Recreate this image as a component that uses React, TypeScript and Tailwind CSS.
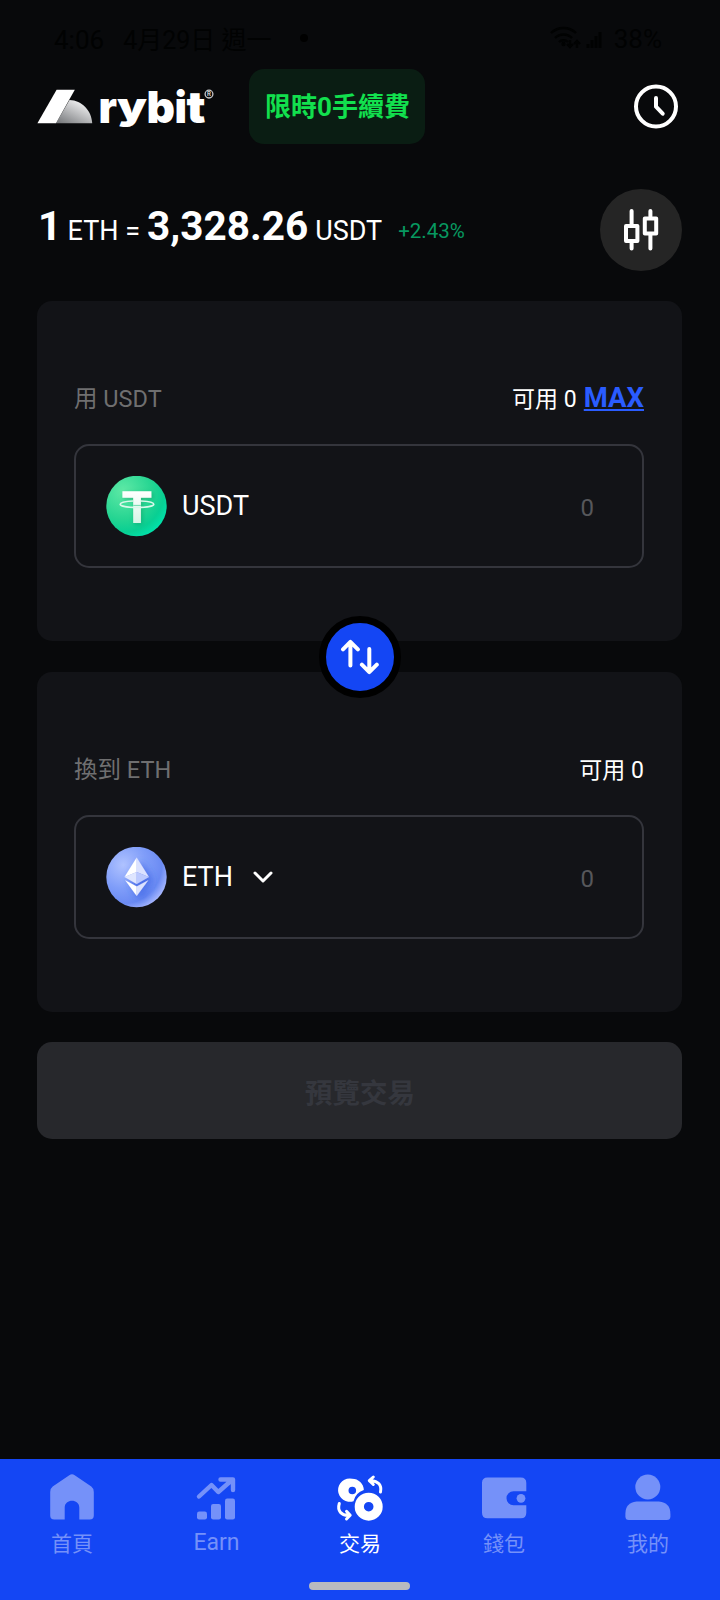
import type { ReactNode } from 'react';

const BrandLogo = () => (
  <svg width="180" height="44" viewBox="0 0 180 44" className="overflow-visible">
    <defs>
      <linearGradient id="brand-arc" x1="0.1" y1="1" x2="0.8" y2="0.1">
        <stop offset="0" stopColor="#77797c" />
        <stop offset="1" stopColor="#f4f4f5" />
      </linearGradient>
    </defs>
    <path d="M19 38.3 32.5 15C45 15.5 54.5 25.5 55.2 38.3Z" fill="url(#brand-arc)" />
    <path d="M0.4 38.3 19.6 4.7H37.8L19 38.3Z" fill="#fff" />
    <g fill="#fff" className="font-['Inter',sans-serif] text-[44px] font-black">
      <text x="61.500" y="38.200" textLength="18.500" lengthAdjust="spacingAndGlyphs">r</text>
      <text x="80" y="33.500" textLength="30" lengthAdjust="spacingAndGlyphs" className="text-[37px]">y</text>
      <text x="109.500" y="38.200" textLength="28.500" lengthAdjust="spacingAndGlyphs">b</text>
      <text x="137.500" y="38.200" textLength="12.500" lengthAdjust="spacingAndGlyphs">i</text>
      <text x="149.500" y="38.200" textLength="19" lengthAdjust="spacingAndGlyphs">t</text>
    </g>
    <circle cx="172" cy="9.1" r="3.9" fill="none" stroke="#c9cacc" strokeWidth="1.3" />
    <text x="172" y="11.4" textAnchor="middle" fill="#c9cacc" className="font-['Inter',sans-serif] text-[6px] font-bold">R</text>
  </svg>
);

const ClockIcon = () => (
  <svg width="46" height="46" viewBox="0 0 46 46" fill="none" stroke="#fff" strokeWidth="4" strokeLinecap="round" strokeLinejoin="round">
    <circle cx="23" cy="22.5" r="20" />
    <path d="M23 14V22.7L29.7 29.7" />
  </svg>
);

const CandleIcon = () => (
  <svg width="36" height="44" viewBox="0 0 36 44" fill="none" stroke="#fff" strokeWidth="4" strokeLinecap="round" strokeLinejoin="round">
    <path d="M8.6 3v13M8.6 35v5.5M27.4 3v5.5M27.4 27v13.5" />
    <rect x="3" y="18" width="11.4" height="15" />
    <rect x="21.8" y="10.4" width="11.4" height="15" />
  </svg>
);

const TetherIcon = () => (
  <svg width="61" height="61" viewBox="0 0 61 61">
    <defs>
      <radialGradient id="tether-bg" cx="0.28" cy="0.25" r="0.85">
        <stop offset="0" stopColor="#5fe9a6" />
        <stop offset="0.55" stopColor="#26d592" />
        <stop offset="0.8" stopColor="#08cf93" />
        <stop offset="1" stopColor="#00e4ae" />
      </radialGradient>
      <linearGradient id="tether-t" x1="0" y1="0" x2="0" y2="1">
        <stop offset="0" stopColor="#fff" />
        <stop offset="1" stopColor="#d6f5e6" />
      </linearGradient>
      <filter id="tether-shadow" x="-50%" y="-50%" width="200%" height="200%">
        <feDropShadow dx="1.5" dy="1.5" stdDeviation="2" floodColor="#0a9a66" floodOpacity="0.55" />
      </filter>
    </defs>
    <circle cx="30.5" cy="30" r="30.2" fill="url(#tether-bg)" />
    <g filter="url(#tether-shadow)">
      <path d="M16.4 15.3H45.4V21.7H34.9V46.9H27.2V21.7H16.4Z" fill="url(#tether-t)" />
    </g>
    <path d="M27.2 25C19.5 25.200 14.200 26.600 14.200 28.200c0 1.800 7.400 3.200 16.800 3.200s16.800-1.400 16.800-3.200c0-1.600-5.200-3-12.900-3.200" fill="none" stroke="#d9f8ea" strokeWidth="1.600" />
    <path d="M27.200 29.400h7.700" stroke="#6fdcae" strokeWidth="1" />
  </svg>
);

const EthIcon = () => (
  <svg width="61" height="61" viewBox="0 0 61 61">
    <defs>
      <radialGradient id="eth-bg" cx="0.28" cy="0.3" r="0.8">
        <stop offset="0" stopColor="#afc2ff" />
        <stop offset="0.5" stopColor="#7f9df9" />
        <stop offset="0.8" stopColor="#6b8bf3" />
        <stop offset="1" stopColor="#a9b9ff" />
      </radialGradient>
      <filter id="eth-shadow" x="-60%" y="-60%" width="220%" height="220%">
        <feDropShadow dx="4" dy="4" stdDeviation="4" floodColor="#2f57e0" floodOpacity="0.75" />
      </filter>
    </defs>
    <circle cx="30.5" cy="30" r="30.200" fill="url(#eth-bg)" />
    <g filter="url(#eth-shadow)">
      <path d="M30.700 10.500 18.500 30 30.700 25Z" fill="#fff" />
      <path d="M30.700 10.500 42.900 30 30.700 25Z" fill="#dbe2ff" />
      <path d="M18.500 30 30.700 25V37Z" fill="#dfe6ff" />
      <path d="M42.900 30 30.700 25V37Z" fill="#bccaff" />
      <path d="M19.200 33.200 30.700 39.500V49Z" fill="#fff" />
      <path d="M42.300 33.200 30.700 39.500V49Z" fill="#dbe2ff" />
    </g>
  </svg>
);

const SwapIcon = () => (
  <svg width="40" height="36" viewBox="0 0 40 36" fill="none" stroke="#fff" strokeWidth="4" strokeLinecap="round" strokeLinejoin="round">
    <path d="M10.400 26.500V3.200M3 10.300 10.400 2.800 17.900 10.300" />
    <path d="M29.300 10V33M21.900 25.700 29.300 33.200 36.800 25.700" />
  </svg>
);

const HomeIcon = () => (
  <svg width="46" height="46" viewBox="0 0 46 46" fill="currentColor">
    <path d="M20.300 1.200a4.600 4.600 0 0 1 5.400 0L42.300 12.600Q44.800 14.500 44.800 18V41.500Q44.800 45.500 40.800 45.500H30.300V33.500C30.300 24.500 15.700 24.500 15.700 33.500V45.500H5.200Q1.200 45.500 1.200 41.500V18Q1.200 14.500 3.700 12.600Z" />
  </svg>
);

const EarnIcon = () => (
  <svg width="46" height="46" viewBox="0 0 46 46" fill="currentColor">
    <rect x="4" y="37.500" width="10" height="8" rx="2.200" />
    <rect x="18" y="30" width="10" height="15.500" rx="2.200" />
    <rect x="32" y="24.500" width="10" height="21" rx="2.200" />
    <path d="M6 22.500 18.500 11 25.300 18 39.500 5.500M27.500 5.500H40V16" fill="none" stroke="currentColor" strokeWidth="4.400" strokeLinecap="round" strokeLinejoin="round" />
  </svg>
);

const TradeIcon = () => (
  <svg width="46" height="46" viewBox="0 0 46 46" className="overflow-visible">
    <path fillRule="evenodd" fill="currentColor" d="M15.300 4.700a11.700 11.700 0 0 1 11.500 11.200 15.500 15.500 0 0 0-10.300 11.300 11.700 11.700 0 1 1-1.200-22.500ZM15.300 12.700a3.800 3.800 0 1 0 0 7.600 3.800 3.800 0 1 0 0-7.600Z" />
    <path fillRule="evenodd" fill="currentColor" d="M31.700 18.700a14 14 0 1 1 0 28 14 14 0 1 1 0-28ZM31.700 27.900a4.800 4.800 0 1 0 0 9.600 4.800 4.800 0 1 0 0-9.600Z" />
    <g fill="none" stroke="currentColor" strokeWidth="3" strokeLinecap="round" strokeLinejoin="round">
      <path d="M43.500 18C45 11 41 7 34 6.700M36.300 3 32.300 6.700 36.300 10.500" />
      <path d="M2.300 29.500C0 37 4.500 41.200 11 41.300M9.500 37.300 13.200 41.300 9.500 45" />
    </g>
  </svg>
);

const WalletIcon = () => (
  <svg width="46" height="46" viewBox="0 0 46 46" fill="currentColor">
    <path d="M6.500 3.500H39.800Q45.300 3.500 45.300 9V17.300H32.500a7 7 0 0 0 0 14H45.300V38.800Q45.300 44.300 39.800 44.300H6.500Q1 44.300 1 38.800V9Q1 3.500 6.500 3.500Z" />
    <circle cx="40" cy="24.300" r="4.400" />
  </svg>
);

const UserIcon = () => (
  <svg width="46" height="46" viewBox="0 0 46 46" fill="currentColor">
    <circle cx="22.800" cy="13" r="12.500" />
    <path d="M11.500 27.500H34Q45.400 28.500 45.400 40V42.500Q45.400 46 41.900 46H3.900Q.4 46 .4 42.500V40Q.4 28.500 11.500 27.500Z" />
  </svg>
);

const StatusBar = () => (
  <div className="flex h-[69px] items-start pt-[22px] pr-[58px] pl-[54px] text-[26px] leading-[34px] text-[#010202]">
    <span className="pt-px">4:06</span>
    <span className="ml-[19px] pt-[2px] text-[25px]">4月29日 週一</span>
    <span className="mt-[12px] ml-[28px] size-2 rounded-full bg-black" />
    <div className="ml-auto flex items-start">
      <svg width="56" height="26" viewBox="0 0 56 26" className="mt-[3px] mr-2" fill="none" stroke="currentColor" strokeWidth="2.400">
        <path d="M1 8a18 18 0 0 1 25 0M5 13a12 12 0 0 1 17 0M9 17a6.500 6.500 0 0 1 9 0" />
        <path d="M20 15v7M17 19l3 3 3-3M27 23v-7M24 19l3-3 3 3" />
        <path d="M38 23v-4M42 23v-8M46 23V11M50 23V7" strokeWidth="3" />
        <circle cx="13.500" cy="19" r="1" />
      </svg>
      <span>38%</span>
    </div>
  </div>
);

type SwapCardProps = {
  label: string;
  symbol: string;
  icon: ReactNode;
  showMax?: boolean;
  selectable?: boolean;
};

const SwapCard = ({ label, symbol, icon, showMax, selectable }: SwapCardProps) => (
  <section className="h-[340px] rounded-[15px] bg-[#121317] pt-[81px] pr-[38px] pl-[37px]">
    <div className="flex h-[34px] items-baseline justify-between text-[23px] leading-[34px]">
      <span className="text-[23.500px] text-[#6f6f70]">{label}</span>
      <span className="text-white">
        可用 0
        {showMax && (
          <button className="ml-[7px] text-[27.500px] leading-[30px] font-bold text-[#2a5cff] underline decoration-2 underline-offset-[2px]">MAX</button>
        )}
      </span>
    </div>
    <div className="mt-[28px] flex h-[124px] items-center rounded-[15px] border-2 border-[#34353c] pr-[48px] pl-[30px]">
      {icon}
      <span className="ml-[15px] pt-px text-[27px] text-white">{symbol}</span>
      {selectable && (
        <svg width="22" height="14" viewBox="0 0 22 14" className="ml-[19px]" fill="none" stroke="#fff" strokeWidth="3" strokeLinecap="round" strokeLinejoin="round">
          <path d="M3 3l8 8 8-8" />
        </svg>
      )}
      <span className="ml-auto pt-[3px] text-[24px] text-[#56575b]">0</span>
    </div>
  </section>
);

const tabs = [
  { label: '首頁', icon: <HomeIcon /> },
  { label: 'Earn', icon: <EarnIcon /> },
  { label: '交易', icon: <TradeIcon />, active: true },
  { label: '錢包', icon: <WalletIcon /> },
  { label: '我的', icon: <UserIcon /> },
];

const TabBar = () => (
  <nav className="mt-auto flex h-[141px] flex-col items-center bg-[#1446f4]">
    <div className="grid h-[123px] w-full grid-cols-5 content-start pt-[15px]">
      {tabs.map(t => (
        <button key={t.label} className={t.active ? 'flex flex-col items-center text-white' : 'flex flex-col items-center text-[#7591f9]'}>
          {t.icon}
          <span className={t.label === 'Earn' ? 'mt-[7px] pl-px text-[23px] leading-[32px]' : 'mt-[8px] text-[21px] leading-[32px]'}>{t.label}</span>
        </button>
      ))}
    </div>
    <div className="mr-[2px] h-[8px] w-[101px] rounded-full bg-[#b8babf]" />
  </nav>
);

const App = () => (
  <div className="flex h-[1600px] w-[720px] flex-col overflow-hidden bg-[#08090b] font-['Roboto','Noto_Sans_CJK_TC',sans-serif]">
    <StatusBar />
    <header className="flex h-[75px] items-center pr-[41px] pl-[37px]">
      <BrandLogo />
      <span className="ml-[32px] flex h-[75px] w-[176px] items-center justify-center rounded-[15px] bg-[#0a1d13] pt-[2px] pl-px text-[26px] font-bold text-[#12e04e]">限時0手續費</span>
      <button className="ml-auto">
        <ClockIcon />
      </button>
    </header>

    <div className="mt-[44px] flex h-[83px] items-center justify-between pr-[38px] pl-[38px]">
      <div className="flex items-baseline pb-[6px] whitespace-nowrap text-white">
        <span className="text-[41px] font-bold">1</span>
        <span className="ml-[6px] text-[27px]">ETH =</span>
        <span className="ml-[7px] text-[40.500px] font-bold">3,328.26</span>
        <span className="ml-[7px] text-[27px]">USDT</span>
        <span className="ml-[16px] -translate-y-[2px] text-[20.500px] text-[#079860]">+2.43%</span>
      </div>
      <button className="flex size-[82px] items-center justify-center rounded-full bg-[#252525]">
        <CandleIcon />
      </button>
    </div>

    <main className="mt-[30px] flex flex-col pr-[38px] pl-[37px]">
      <div className="relative flex flex-col gap-[31px]">
        <SwapCard label="用 USDT" symbol="USDT" icon={<TetherIcon />} showMax />
        <SwapCard label="換到 ETH" symbol="ETH" icon={<EthIcon />} selectable />
        <button className="absolute top-1/2 left-1/2 flex size-[82px] -translate-x-1/2 -translate-y-1/2 items-center justify-center rounded-full border-[7px] border-black bg-[#1446f4]">
          <SwapIcon />
        </button>
      </div>
      <button className="mt-[30px] h-[97px] rounded-[15px] bg-[#27282c] pt-[6px] pl-px text-[27.500px] font-bold text-[#35373e]">預覽交易</button>
    </main>

    <TabBar />
  </div>
);

export default App;
